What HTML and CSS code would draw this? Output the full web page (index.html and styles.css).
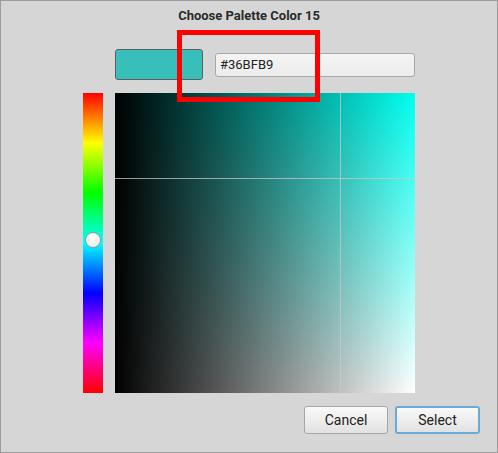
FILE: index.html
```html
<!DOCTYPE html>
<html>
<head>
<meta charset="utf-8">
<link rel="stylesheet" href="styles.css">
</head>
<body>
<div class="window">
  <div class="title">Choose Palette Color 15</div>
  <div class="toprow">
    <div class="swatch"></div>
    <div class="hexinput">#36BFB9</div>
  </div>
  <div class="main">
    <div class="huebar">
      <div class="huethumb"></div>
    </div>
    <div class="square">
      <div class="vline"></div>
      <div class="hline"></div>
    </div>
  </div>
  <div class="buttons">
    <div class="btn">Cancel</div>
    <div class="btn primary">Select</div>
  </div>
  <div class="highlight"></div>
</div>
</body>
</html>
```
FILE: styles.css
```css
html, body {
  margin: 0;
  padding: 0;
  background: #d6d6d6;
}
.window {
  position: relative;
  width: 498px;
  height: 453px;
  box-sizing: border-box;
  border: 1px solid #9c9c9c;
  background: #d6d6d6;
  display: flex;
  flex-direction: column;
  font-family: Roboto, "Liberation Sans", sans-serif;
  color: #222;
}
.title {
  height: 30px;
  line-height: 30px;
  text-align: center;
  font-weight: bold;
  font-size: 13px;
  color: #2a2a2a;
}
.toprow {
  margin-top: 18px;
  padding-left: 114px;
  display: flex;
  align-items: center;
  gap: 12px;
  height: 31px;
}
.swatch {
  width: 88px;
  height: 31px;
  box-sizing: border-box;
  background: #38bfb9;
  border: 1px solid #5f5f5f;
  border-radius: 3px;
}
.hexinput {
  width: 200px;
  height: 24px;
  box-sizing: border-box;
  border: 1px solid #a8a8a8;
  border-radius: 3px;
  background: linear-gradient(to bottom, #f4f4f4, #ececec);
  font-size: 13px;
  line-height: 22px;
  padding-left: 4px;
  color: #222;
}
.main {
  margin-top: 13px;
  padding-left: 82px;
  display: flex;
  gap: 12px;
  height: 300px;
}
.huebar {
  position: relative;
  width: 20px;
  height: 300px;
  background: linear-gradient(to bottom, #ff0000 0%, #ffff00 16.67%, #00ff00 33.33%, #00ffff 50%, #0000ff 66.67%, #ff00ff 83.33%, #ff0000 100%);
}
.huethumb {
  position: absolute;
  left: 2px;
  top: 139px;
  width: 16px;
  height: 16px;
  box-sizing: border-box;
  border-radius: 50%;
  border: 1px solid #9a9a9a;
  background: radial-gradient(circle at 50% 35%, #ffffff, #e6e6e6);
}
.square {
  position: relative;
  width: 300px;
  height: 300px;
  background:
    linear-gradient(to right, #000000, rgba(0,0,0,0)),
    linear-gradient(to bottom, rgba(255,255,255,0), #ffffff),
    #00fff0;
}
.vline {
  position: absolute;
  left: 225px;
  top: 0;
  width: 1px;
  height: 300px;
  background: rgba(200,200,200,0.75);
}
.hline {
  position: absolute;
  left: 0;
  top: 85px;
  width: 300px;
  height: 1px;
  background: rgba(200,200,200,0.75);
}
.buttons {
  margin-top: 13px;
  padding-right: 17px;
  display: flex;
  justify-content: flex-end;
  gap: 7px;
}
.btn {
  width: 84px;
  height: 28px;
  box-sizing: border-box;
  border: 1px solid #a6a6a6;
  border-radius: 3px;
  background: linear-gradient(to bottom, #f9f9f9, #e2e2e2);
  font-size: 14px;
  line-height: 26px;
  text-align: center;
  color: #222;
}
.btn.primary {
  width: 85px;
  border: 2px solid #6aaad6;
  line-height: 24px;
}
.highlight {
  position: absolute;
  left: 176px;
  top: 29px;
  width: 143px;
  height: 72px;
  box-sizing: border-box;
  border: 5px solid #ff0000;
}
```
